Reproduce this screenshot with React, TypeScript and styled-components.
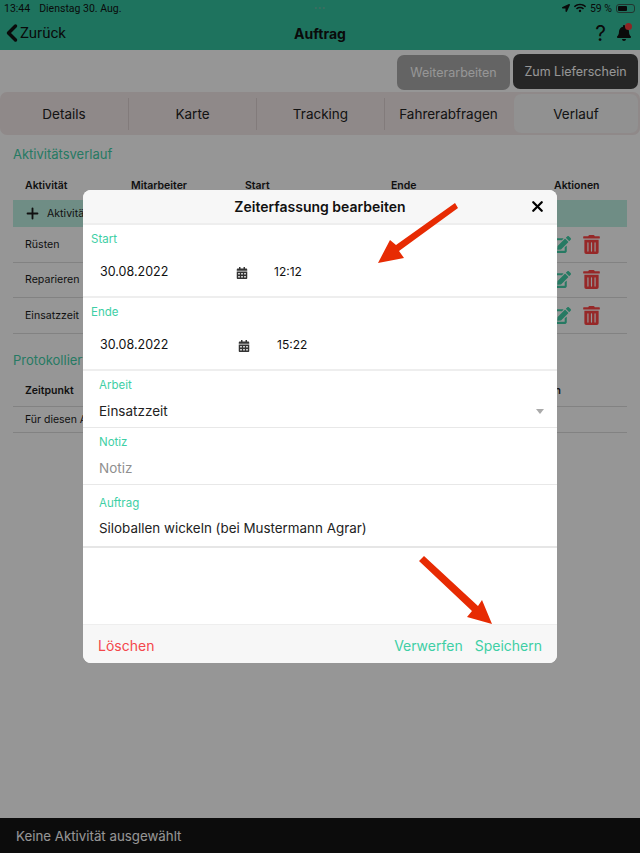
import React from "react";
import styled, { createGlobalStyle } from "styled-components";
import { FaCalendarAlt, FaEdit, FaTrashAlt, FaBell, FaLocationArrow, FaWifi } from "react-icons/fa";
import { FiChevronLeft, FiPlus, FiX } from "react-icons/fi";

const GlobalStyle = createGlobalStyle`
	html, body {
		margin: 0;
		padding: 0;
		height: 100%;
		background: #fff;
	}
	* {
		box-sizing: border-box;
	}
`;

const display = `"Inter", "Open Sans", sans-serif`;
const body = `"Inter", "Roboto", sans-serif`;

const activities = ["Rüsten", "Reparieren", "Einsatzzeit"];
const tabs = ["Details", "Karte", "Tracking", "Fahrerabfragen", "Verlauf"];

export default function App() {
	return (
		<Page>
			<GlobalStyle />
			<Header>
				<StatusBar>
					<StatusLeft>
						<span>13:44</span>
						<span>Dienstag 30. Aug.</span>
					</StatusLeft>
					<Dots>•••</Dots>
					<StatusRight>
						<FaLocationArrow size={8} />
						<FaWifi size={12} />
						<span>59 %</span>
						<Battery>
							<BatteryFill />
						</Battery>
					</StatusRight>
				</StatusBar>
				<NavBar>
					<BackLink>
						<FiChevronLeft size={28} strokeWidth={3} />
						Zurück
					</BackLink>
					<NavTitle>Auftrag</NavTitle>
					<NavIcons>
						<Help>?</Help>
						<BellWrap>
							<FaBell size={16} />
							<BellDot />
						</BellWrap>
					</NavIcons>
				</NavBar>
			</Header>

			<ActionRow>
				<ActionButton $muted>Weiterarbeiten</ActionButton>
				<ActionButton>Zum Lieferschein</ActionButton>
			</ActionRow>

			<Tabs>
				{tabs.map((tab) => (
					<Tab key={tab} $active={tab === "Verlauf"}>
						{tab}
					</Tab>
				))}
			</Tabs>

			<Section>
				<SectionTitle>Aktivitätsverlauf</SectionTitle>
				<HeadRow>
					<Col $w={106}>Aktivität</Col>
					<Col $w={114}>Mitarbeiter</Col>
					<Col $w={146}>Start</Col>
					<Col $w={163}>Ende</Col>
					<Col $w={60}>Aktionen</Col>
				</HeadRow>
				<AddRow>
					<FiPlus size={17} strokeWidth={2.6} />
					<span>Aktivität hinzufügen</span>
				</AddRow>
				{activities.map((name) => (
					<ActivityRow key={name}>
						<span>{name}</span>
						<RowIcons>
							<EditIcon size={19} />
							<TrashIcon size={19} />
						</RowIcons>
					</ActivityRow>
				))}
			</Section>

			<Section $second>
				<SectionTitle>Protokollierte Zeiten</SectionTitle>
				<ProtocolHead>
					<span>Zeitpunkt</span>
					<span>Aktion</span>
				</ProtocolHead>
				<ProtocolRow>Für diesen Auftrag gibt es keine Einträge</ProtocolRow>
			</Section>

			<BottomBar>Keine Aktivität ausgewählt</BottomBar>

			<Overlay>
				<Modal>
					<ModalHeader>
						Zeiterfassung bearbeiten
						<CloseButton>
							<FiX size={17} strokeWidth={3.2} />
						</CloseButton>
					</ModalHeader>

					<DateField>
						<FieldLabel>Start</FieldLabel>
						<DateRow>
							<DateValue>30.08.2022</DateValue>
							<CalendarIcon size={12} $x={136} />
							<TimeValue $x={26}>12:12</TimeValue>
						</DateRow>
					</DateField>

					<DateField>
						<FieldLabel>Ende</FieldLabel>
						<DateRow>
							<DateValue>30.08.2022</DateValue>
							<CalendarIcon size={12} $x={138} />
							<TimeValue $x={27}>15:22</TimeValue>
						</DateRow>
					</DateField>

					<InputField $h={57}>
						<FieldLabel $inset>Arbeit</FieldLabel>
						<InputValue>Einsatzzeit</InputValue>
						<SelectCaret />
					</InputField>

					<InputField $h={57}>
						<FieldLabel $inset>Notiz</FieldLabel>
						<InputValue $placeholder>Notiz</InputValue>
					</InputField>

					<InputField $h={63} $thick>
						<FieldLabel $inset $low>Auftrag</FieldLabel>
						<InputValue $small>Siloballen wickeln (bei Mustermann Agrar)</InputValue>
					</InputField>

					<ModalSpacer />

					<ModalFooter>
						<FooterButton $danger>Löschen</FooterButton>
						<FooterActions>
							<FooterButton>Verwerfen</FooterButton>
							<FooterButton>Speichern</FooterButton>
						</FooterActions>
					</ModalFooter>
				</Modal>

				<Arrows viewBox="0 0 640 853">
					<path d="M455 203 L396 245 L390 240 L378 263 L404 258 L399 251 L458 208 Z" fill="#e72b03" />
					<path d="M424 556 L478 606 L482 600 L492 624 L467 617 L472 611 L419 561 Z" fill="#e72b03" />
				</Arrows>
			</Overlay>
		</Page>
	);
}

const Page = styled.div`
	position: relative;
	width: 640px;
	height: 853px;
	overflow: hidden;
	display: flex;
	flex-direction: column;
	background: #fff;
	font-family: ${body};
	color: #1c1c1c;
`;

const Header = styled.header`
	height: 50px;
	background: #34c4a1;
	color: #111;
`;

const StatusBar = styled.div`
	height: 16px;
	padding: 0 5px 0 4px;
	display: flex;
	justify-content: space-between;
	align-items: center;
	font-family: "Roboto", sans-serif;
	font-size: 10.5px;
	position: relative;
`;

const StatusLeft = styled.div`
	display: flex;
	gap: 9px;
`;

const Dots = styled.div`
	position: absolute;
	left: 0;
	right: 0;
	top: 3px;
	text-align: center;
	font-size: 9px;
	letter-spacing: 1px;
	color: #6cb8a4;
`;

const StatusRight = styled.div`
	display: flex;
	align-items: center;
	gap: 4px;
`;

const Battery = styled.div`
	width: 19px;
	height: 9px;
	padding: 1px;
	border: 1px solid #3a5a50;
	border-radius: 3px;
`;

const BatteryFill = styled.div`
	width: 59%;
	height: 100%;
	background: #111;
	border-radius: 1px;
`;

const NavBar = styled.div`
	height: 34px;
	padding: 0 6px 0 0;
	display: flex;
	align-items: center;
	justify-content: space-between;
	position: relative;
`;

const BackLink = styled.div`
	display: flex;
	align-items: center;
	font-family: "Roboto", sans-serif;
	font-size: 15px;

	svg {
		margin: 0 -6px 0 -2px;
	}
`;

const NavTitle = styled.div`
	position: absolute;
	left: 0;
	right: 0;
	text-align: center;
	font-family: ${body};
	font-size: 14px;
	font-weight: 700;
	pointer-events: none;
`;

const NavIcons = styled.div`
	display: flex;
	align-items: center;
	gap: 10px;
	padding-right: 2px;
`;

const Help = styled.span`
	font-size: 21px;
	font-family: ${body};
`;

const BellWrap = styled.span`
	position: relative;
	display: flex;
`;

const BellDot = styled.span`
	position: absolute;
	top: -2px;
	right: 0;
	width: 7px;
	height: 7px;
	border-radius: 50%;
	background: #f04040;
`;

const ActionRow = styled.div`
	height: 42px;
	padding: 4px 2px 0 0;
	display: flex;
	justify-content: flex-end;
	gap: 3px;
`;

const ActionButton = styled.div<{ $muted?: boolean }>`
	height: 35px;
	width: ${(p) => (p.$muted ? "113px" : "125px")};
	margin-top: ${(p) => (p.$muted ? "1px" : "0")};
	display: flex;
	align-items: center;
	justify-content: center;
	border-radius: 7px;
	font-family: ${display};
	font-size: 12.5px;
	color: #fff;
	background: ${(p) => (p.$muted ? "#aaa" : "#424242")};
`;

const Tabs = styled.nav`
	height: 43px;
	display: flex;
	align-items: center;
	background: #f4e9e9;
	border-radius: 7px;
`;

const Tab = styled.div<{ $active?: boolean }>`
	flex: 0 0 ${(p) => (p.$active ? "124px" : "128px")};
	height: ${(p) => (p.$active ? "39px" : "32px")};
	margin: 0 ${(p) => (p.$active ? "2px" : "0")};
	display: flex;
	align-items: center;
	justify-content: center;
	font-family: ${display};
	font-size: 13.5px;
	color: #222;
	border-left: ${(p) => (p.$active ? "none" : "1px solid #ddd2d2")};
	background: ${(p) => (p.$active ? "#f6f6f6" : "transparent")};
	border-radius: ${(p) => (p.$active ? "7px" : "0")};

	&:first-child {
		border-left: none;
	}
`;

const Section = styled.section<{ $second?: boolean }>`
	padding: 0 13px;
	margin-top: ${(p) => (p.$second ? "16px" : "9px")};
`;

const SectionTitle = styled.h2`
	margin: 0;
	height: 20px;
	line-height: 20px;
	font-family: ${display};
	font-size: 13px;
	font-weight: 400;
	color: #42d0a9;
`;

const HeadRow = styled.div`
	height: 29px;
	margin-top: 7px;
	padding-left: 12px;
	display: flex;
	align-items: center;
	font-size: 10.5px;
	font-weight: 600;
`;

const Col = styled.div<{ $w: number }>`
	width: ${(p) => p.$w}px;
`;

const AddRow = styled.div`
	height: 27px;
	padding-left: 11px;
	display: flex;
	align-items: center;
	gap: 6px;
	font-size: 10.6px;
	background: #bdf0e2;
`;

const ActivityRow = styled.div`
	height: 35.5px;
	padding: 0 26px 0 12px;
	display: flex;
	align-items: center;
	justify-content: space-between;
	font-size: 10.6px;
	border-bottom: 1px solid #ddd;
`;

const RowIcons = styled.div`
	display: flex;
	align-items: center;
	gap: 11px;
`;

const EditIcon = styled(FaEdit)`
	color: #42d0a9;
`;

const TrashIcon = styled(FaTrashAlt)`
	color: #ff4444;
`;

const ProtocolHead = styled.div`
	height: 31px;
	margin-top: 6px;
	padding: 0 66px 0 12px;
	display: flex;
	align-items: center;
	justify-content: space-between;
	font-size: 10.5px;
	font-weight: 600;
	border-bottom: 1px solid #ddd;
`;

const ProtocolRow = styled.div`
	height: 26px;
	padding-left: 12px;
	display: flex;
	align-items: center;
	font-size: 10.5px;
	border-bottom: 1px solid #ddd;
`;

const BottomBar = styled.footer`
	margin-top: auto;
	height: 35px;
	padding-left: 16px;
	display: flex;
	align-items: center;
	font-family: ${display};
	font-size: 13.3px;
	color: #fff;
	background: #151515;
`;

const Overlay = styled.div`
	position: absolute;
	inset: 0;
	display: flex;
	align-items: center;
	justify-content: center;
	background: rgba(0, 0, 0, 0.41);
`;

const Modal = styled.div`
	width: 474px;
	height: 473px;
	display: flex;
	flex-direction: column;
	overflow: hidden;
	border-radius: 8px;
	background: #fff;
	font-family: ${display};
`;

const ModalHeader = styled.div`
	position: relative;
	flex: 0 0 35px;
	padding-bottom: 1px;
	display: flex;
	align-items: center;
	justify-content: center;
	font-size: 14px;
	font-weight: 600;
	color: #111;
	background: #f7f7f7;
	border-bottom: 2px solid #eee;
`;

const CloseButton = styled.span`
	position: absolute;
	top: 8px;
	right: 11px;
	display: flex;
	color: #000;
`;

const DateField = styled.div`
	flex: 0 0 73px;
	padding: 7px 8px 0;
	border-bottom: 2px solid #eee;
`;

const FieldLabel = styled.div<{ $inset?: boolean; $low?: boolean }>`
	height: 14px;
	line-height: 14px;
	margin-top: ${(p) => (p.$low ? "4px" : "0")};
	padding-left: ${(p) => (p.$inset ? "8px" : "0")};
	font-size: 11.5px;
	color: #3ecfa5;
`;

const DateRow = styled.div`
	margin-top: 15px;
	height: 20px;
	padding-left: 9px;
	display: flex;
	align-items: center;
	font-size: 12.5px;
	color: #111;
`;

const DateValue = styled.span`
	width: 0;
	white-space: nowrap;
`;

const CalendarIcon = styled(FaCalendarAlt)<{ $x: number }>`
	margin: 3px 0 0 ${(p) => p.$x}px;
	color: #333;
`;

const TimeValue = styled.span<{ $x: number }>`
	margin: 1px 0 0 ${(p) => p.$x}px;
	font-size: 12px;
`;

const InputField = styled.div<{ $h: number; $thick?: boolean }>`
	position: relative;
	flex: 0 0 ${(p) => p.$h}px;
	padding: 7px 8px 0;
	border-bottom: ${(p) => (p.$thick ? "2px solid #e6e6e6" : "1px solid #e8e8e8")};
`;

const InputValue = styled.div<{ $placeholder?: boolean; $small?: boolean }>`
	margin-top: ${(p) => (p.$small ? "8px" : "9px")};
	padding-left: 8px;
	font-size: ${(p) => (p.$small ? "13.4px" : "13.5px")};
	line-height: 20px;
	color: ${(p) => (p.$placeholder ? "#8f8f8f" : "#222")};
`;

const SelectCaret = styled.span`
	position: absolute;
	right: 13px;
	top: 38px;
	border-left: 4px solid transparent;
	border-right: 4px solid transparent;
	border-top: 5px solid #aaa;
`;

const ModalSpacer = styled.div`
	flex: 1;
`;

const ModalFooter = styled.div`
	flex: 0 0 39px;
	padding: 2px 15px 0;
	display: flex;
	align-items: center;
	justify-content: space-between;
	background: #f7f7f7;
	border-top: 1px solid #eee;
`;

const FooterActions = styled.div`
	display: flex;
	gap: 12px;
`;

const FooterButton = styled.span<{ $danger?: boolean }>`
	font-size: 14px;
	color: ${(p) => (p.$danger ? "#f4474b" : "#3ecfa5")};
`;

const Arrows = styled.svg`
	position: absolute;
	inset: 0;
	width: 640px;
	height: 853px;
`;
